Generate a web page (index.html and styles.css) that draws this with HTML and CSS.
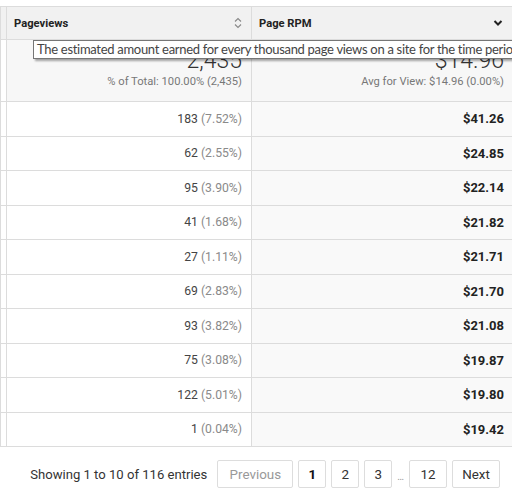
FILE: index.html
```html
<!DOCTYPE html>
<html>
<head>
<meta charset="utf-8">
<link rel="stylesheet" href="styles.css">
</head>
<body>
<div class="wrap">
  <table class="grid">
    <thead>
      <tr class="head">
        <th class="stub"></th>
        <th class="col pv"><div class="hcell"><span>Pageviews</span>
          <svg width="8" height="12" viewBox="0 0 8 12"><path d="M1 4.5 L4 1.5 L7 4.5" fill="none" stroke="#888" stroke-width="1.1"/><path d="M1 7.5 L4 10.5 L7 7.5" fill="none" stroke="#888" stroke-width="1.1"/></svg></div></th>
        <th class="col rpm"><div class="hcell"><span>Page RPM</span>
          <svg width="10" height="8" viewBox="0 0 10 8"><path d="M1.5 2 L5 5.5 L8.5 2" fill="none" stroke="#222" stroke-width="2"/></svg></div></th>
      </tr>
      <tr class="sum">
        <td class="stub"></td>
        <td class="num"><div class="big">2,435</div><div class="small">% of Total: 100.00% (2,435)</div></td>
        <td class="num"><div class="big">$14.96</div><div class="small">Avg for View: $14.96 (0.00%)</div></td>
      </tr>
    </thead>
    <tbody>
      <tr><td class="stub"></td><td class="num">183 <span class="pct">(7.52%)</span></td><td class="num money">$41.26</td></tr>
      <tr><td class="stub"></td><td class="num">62 <span class="pct">(2.55%)</span></td><td class="num money">$24.85</td></tr>
      <tr><td class="stub"></td><td class="num">95 <span class="pct">(3.90%)</span></td><td class="num money">$22.14</td></tr>
      <tr><td class="stub"></td><td class="num">41 <span class="pct">(1.68%)</span></td><td class="num money">$21.82</td></tr>
      <tr><td class="stub"></td><td class="num">27 <span class="pct">(1.11%)</span></td><td class="num money">$21.71</td></tr>
      <tr><td class="stub"></td><td class="num">69 <span class="pct">(2.83%)</span></td><td class="num money">$21.70</td></tr>
      <tr><td class="stub"></td><td class="num">93 <span class="pct">(3.82%)</span></td><td class="num money">$21.08</td></tr>
      <tr><td class="stub"></td><td class="num">75 <span class="pct">(3.08%)</span></td><td class="num money">$19.87</td></tr>
      <tr><td class="stub"></td><td class="num">122 <span class="pct">(5.01%)</span></td><td class="num money">$19.80</td></tr>
      <tr><td class="stub"></td><td class="num">1 <span class="pct">(0.04%)</span></td><td class="num money">$19.42</td></tr>
    </tbody>
  </table>
  <div class="tooltip">The estimated amount earned for every thousand page views on a site for the time period</div>
  <div class="footer">
    <span class="info">Showing 1 to 10 of 116 entries</span>
    <div class="pager">
      <span class="btn prev">Previous</span>
      <span class="btn cur">1</span>
      <span class="btn">2</span>
      <span class="btn">3</span>
      <span class="dots">…</span>
      <span class="btn twelve">12</span>
      <span class="btn next">Next</span>
    </div>
  </div>
</div>
</body>
</html>
```

FILE: styles.css
```css
* { box-sizing: border-box; }
html, body { margin: 0; padding: 0; background: #fff; }
body { font-family: Roboto, "Liberation Sans", Arial, sans-serif; color: #333; width: 512px; height: 493px; overflow: hidden; }
.wrap { position: relative; padding-top: 6px; }
.grid { border-collapse: collapse; width: 512px; table-layout: fixed; }
.grid td, .grid th { border: 1px solid #dcdcdc; padding: 0; }
.grid tr > :last-child { border-right: 0; }
.stub { width: 6px; }
.col.pv { width: 245px; }
.head th { background: #f1f1f1; height: 33px; text-align: left; font-size: 11.2px; font-weight: 700; color: #222; }
.hcell { display: flex; align-items: center; justify-content: space-between; padding: 0 9px 0 7px; }
.rpm .hcell { padding-right: 9px; }
.sum td { background: #f7f7f7; height: 62px; vertical-align: top; }
.sum .stub { background: #fff; }
.big { font-size: 23px; color: #333; line-height: 26px; margin-top: 8px; font-weight: 300; }
.small { font-size: 11.2px; color: #777; line-height: 15px; }
tbody td { height: 34.5px; font-size: 12.2px; color: #444; }
.num { text-align: right; padding-right: 9px !important; }
.pct { color: #8a8a8a; }
.grid td.num:last-child { padding-right: 8px !important; }
tbody td.money { background: #f9f9f9; font-weight: 700; color: #222; font-size: 13px; }
.tooltip { position: absolute; left: 33px; right: 0; top: 40px; overflow: hidden; white-space: nowrap; background: #fff; border: 1px solid #767676; border-right: 0; box-shadow: 2px 2px 2px rgba(0,0,0,0.35); font-family: Lato, "Open Sans", sans-serif; font-size: 13px; letter-spacing: -0.3px; color: #444; padding: 0 3px; line-height: 17px; }
.footer { display: flex; align-items: center; justify-content: flex-end; padding: 13px 12px 0 0; }
.info { font-size: 13.1px; color: #333; margin-right: 10px; }
.pager { display: flex; align-items: center; gap: 5px; }
.btn { display: inline-flex; align-items: center; justify-content: center; height: 28px; width: 28px; padding: 0; border: 1px solid #ddd; border-radius: 2px; font-size: 13.4px; color: #333; background: #fff; }
.prev { color: #999; width: 76px; }
.cur { font-weight: 700; color: #111; }
.twelve { width: 38px; }
.next { width: 48px; }
.dots { font-size: 10px; color: #999; margin: 0 0; align-self: flex-end; padding-bottom: 6px; }
```
